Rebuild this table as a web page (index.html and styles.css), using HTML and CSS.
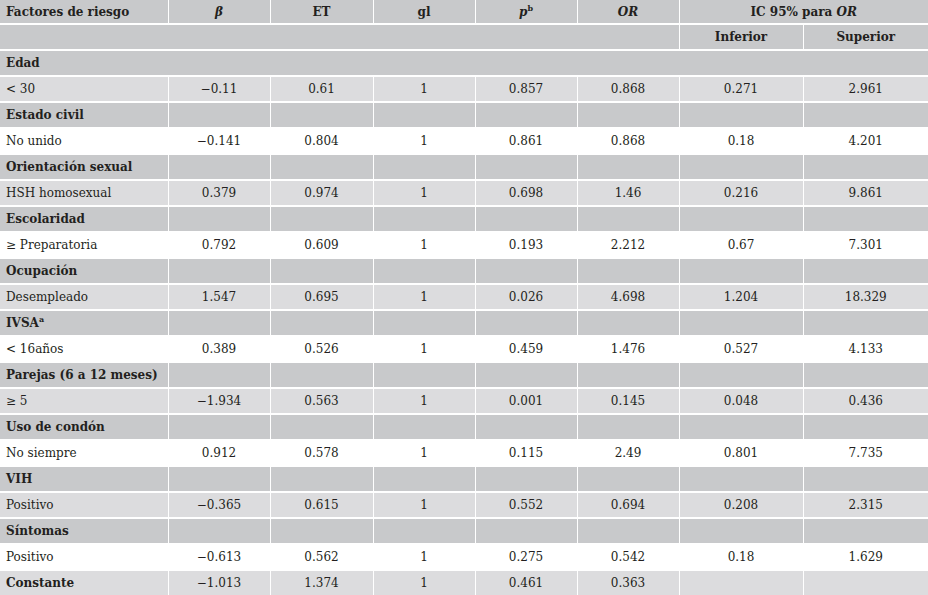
FILE: index.html
```html
<!DOCTYPE html>
<html lang="es">
<head>
<meta charset="utf-8">
<title>Factores de riesgo</title>
<link rel="stylesheet" href="styles.css">
</head>
<body>
<table class="tbl">
  <colgroup>
    <col class="c1"><col class="c2"><col class="c3"><col class="c4"><col class="c5"><col class="c6"><col class="c7"><col class="c8">
  </colgroup>
  <thead>
    <tr class="hd first">
      <th class="lft">Factores de riesgo</th>
      <th><b><i>β</i></b></th>
      <th>ET</th>
      <th>gl</th>
      <th><i>p</i><sup>b</sup></th>
      <th><i>OR</i></th>
      <th colspan="2">IC 95% para <i>OR</i></th>
    </tr>
    <tr class="hd">
      <th colspan="6"></th>
      <th>Inferior</th>
      <th>Superior</th>
    </tr>
  </thead>
  <tbody>
    <tr class="cat"><td class="lft" colspan="8">Edad</td></tr>
    <tr class="gray"><td class="lft">&lt; 30</td><td>−0.11</td><td>0.61</td><td>1</td><td>0.857</td><td>0.868</td><td>0.271</td><td>2.961</td></tr>
    <tr class="cat"><td class="lft">Estado civil</td><td></td><td></td><td></td><td></td><td></td><td></td><td></td></tr>
    <tr class="white"><td class="lft">No unido</td><td>−0.141</td><td>0.804</td><td>1</td><td>0.861</td><td>0.868</td><td>0.18</td><td>4.201</td></tr>
    <tr class="cat"><td class="lft">Orientación sexual</td><td></td><td></td><td></td><td></td><td></td><td></td><td></td></tr>
    <tr class="gray"><td class="lft">HSH homosexual</td><td>0.379</td><td>0.974</td><td>1</td><td>0.698</td><td>1.46</td><td>0.216</td><td>9.861</td></tr>
    <tr class="cat"><td class="lft">Escolaridad</td><td></td><td></td><td></td><td></td><td></td><td></td><td></td></tr>
    <tr class="white"><td class="lft">≥ Preparatoria</td><td>0.792</td><td>0.609</td><td>1</td><td>0.193</td><td>2.212</td><td>0.67</td><td>7.301</td></tr>
    <tr class="cat"><td class="lft">Ocupación</td><td></td><td></td><td></td><td></td><td></td><td></td><td></td></tr>
    <tr class="gray"><td class="lft">Desempleado</td><td>1.547</td><td>0.695</td><td>1</td><td>0.026</td><td>4.698</td><td>1.204</td><td>18.329</td></tr>
    <tr class="cat"><td class="lft">IVSA<sup>a</sup></td><td></td><td></td><td></td><td></td><td></td><td></td><td></td></tr>
    <tr class="white"><td class="lft">&lt; 16años</td><td>0.389</td><td>0.526</td><td>1</td><td>0.459</td><td>1.476</td><td>0.527</td><td>4.133</td></tr>
    <tr class="cat"><td class="lft">Parejas (6 a 12 meses)</td><td></td><td></td><td></td><td></td><td></td><td></td><td></td></tr>
    <tr class="gray"><td class="lft">≥ 5</td><td>−1.934</td><td>0.563</td><td>1</td><td>0.001</td><td>0.145</td><td>0.048</td><td>0.436</td></tr>
    <tr class="cat"><td class="lft">Uso de condón</td><td></td><td></td><td></td><td></td><td></td><td></td><td></td></tr>
    <tr class="white"><td class="lft">No siempre</td><td>0.912</td><td>0.578</td><td>1</td><td>0.115</td><td>2.49</td><td>0.801</td><td>7.735</td></tr>
    <tr class="cat"><td class="lft">VIH</td><td></td><td></td><td></td><td></td><td></td><td></td><td></td></tr>
    <tr class="gray"><td class="lft">Positivo</td><td>−0.365</td><td>0.615</td><td>1</td><td>0.552</td><td>0.694</td><td>0.208</td><td>2.315</td></tr>
    <tr class="cat"><td class="lft">Síntomas</td><td></td><td></td><td></td><td></td><td></td><td></td><td></td></tr>
    <tr class="white"><td class="lft">Positivo</td><td>−0.613</td><td>0.562</td><td>1</td><td>0.275</td><td>0.542</td><td>0.18</td><td>1.629</td></tr>
    <tr class="gray"><td class="lft strong">Constante</td><td>−1.013</td><td>1.374</td><td>1</td><td>0.461</td><td>0.363</td><td></td><td></td></tr>
  </tbody>
</table>
</body>
</html>
```

FILE: styles.css
```css
html, body {
  margin: 0;
  padding: 0;
  background: #ffffff;
}

.tbl {
  width: 928px;
  table-layout: fixed;
  border-collapse: collapse;
  font-family: "DejaVu Serif", "Liberation Serif", serif;
  font-size: 12px;
  color: #231f20;
}

.c1 { width: 168px; }
.c2 { width: 102px; }
.c3 { width: 103px; }
.c4 { width: 102px; }
.c5 { width: 102px; }
.c6 { width: 102px; }
.c7 { width: 124px; }
.c8 { width: 125px; }

.tbl th,
.tbl td {
  height: 26px;
  padding: 0 6px;
  box-sizing: border-box;
  text-align: center;
  vertical-align: middle;
  border: 1px solid #ffffff;
  border-top-width: 1px;
  border-bottom-width: 2px;
  white-space: nowrap;
  overflow: hidden;
}

.tbl tr.first th {
  height: 24px;
  border-top: 0;
}

.tbl th,
.tbl .cat td {
  font-weight: bold;
}

.tbl .lft {
  text-align: left;
}

.tbl td.strong {
  font-weight: bold;
}

.tbl tr > :first-child { border-left: 0; }
.tbl tr > :last-child { border-right: 0; }

.hd th,
.cat td {
  background: #c8c9cb;
}

.gray td {
  background: #dcdcde;
}

.white td {
  background: #ffffff;
}

.tbl sup {
  font-size: 8px;
  line-height: 0;
  vertical-align: 5px;
}
```
